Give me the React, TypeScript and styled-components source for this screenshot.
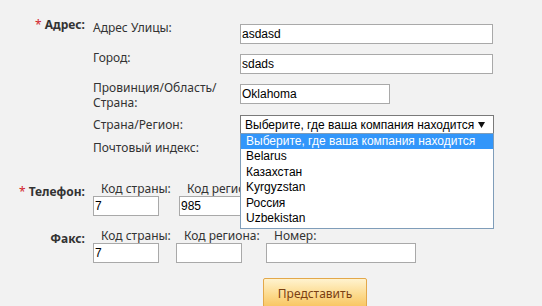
import React from 'react';
import styled, { createGlobalStyle } from 'styled-components';

const GlobalStyle = createGlobalStyle`
  html, body {
    margin: 0;
    padding: 0;
    background: #f2f2f2;
  }
`;

const countries = ['Belarus', 'Казахстан', 'Kyrgyzstan', 'Россия', 'Uzbekistan'];
const placeholder = 'Выберите, где ваша компания находится';

const App: React.FC = () => {
  return (
    <>
      <GlobalStyle />
      <Form onSubmit={(e) => e.preventDefault()}>
        <Group>
          <GroupLabel $pt={-3}>
            <Star>*</Star> Адрес:
          </GroupLabel>
          <div>
            <AddrRow $h={30}>
              <SubLabel>Адрес Улицы:</SubLabel>
              <TextInput $w={253} defaultValue="asdasd" />
            </AddrRow>
            <AddrRow $h={30}>
              <SubLabel>Город:</SubLabel>
              <TextInput $w={253} defaultValue="sdads" />
            </AddrRow>
            <AddrRow $h={31}>
              <SubLabel>
                Провинция/Область/
                <br />
                Страна:
              </SubLabel>
              <TextInput $w={150} defaultValue="Oklahoma" />
            </AddrRow>
            <AddrRow $h={30}>
              <SubLabel $pt={6}>Страна/Регион:</SubLabel>
              <SelectWrap>
                <SelectBox>
                  <span>{placeholder}</span>
                  <svg width="7" height="6" viewBox="0 0 7 6">
                    <path d="M0 0 H7 L3.5 6 Z" fill="#111" />
                  </svg>
                </SelectBox>
                <OptionList>
                  <OptionItem $active>{placeholder}</OptionItem>
                  {countries.map((c) => (
                    <OptionItem key={c}>{c}</OptionItem>
                  ))}
                </OptionList>
              </SelectWrap>
            </AddrRow>
            <AddrRow $h={24}>
              <SubLabel $pt={-1}>Почтовый индекс:</SubLabel>
              <TextInput $w={100} />
            </AddrRow>
          </div>
        </Group>

        <Group $mt={17}>
          <GroupLabel $pt={2}>
            <Star>*</Star> Телефон:
          </GroupLabel>
          <Cells>
            <Cell $w={86}>
              <CellLabel>Код страны:</CellLabel>
              <TextInput $w={66} defaultValue="7" />
            </Cell>
            <Cell $w={93}>
              <CellLabel>Код региона:</CellLabel>
              <TextInput $w={66} defaultValue="985" />
            </Cell>
          </Cells>
        </Group>

        <Group $mt={13}>
          <GroupLabel $pt={2}>Факс:</GroupLabel>
          <Cells>
            <Cell $w={83}>
              <CellLabel>Код страны:</CellLabel>
              <TextInput $w={66} defaultValue="7" />
            </Cell>
            <Cell $w={90}>
              <CellLabel>Код региона:</CellLabel>
              <TextInput $w={66} />
            </Cell>
            <Cell $w={160}>
              <CellLabel>Номер:</CellLabel>
              <TextInput $w={150} />
            </Cell>
          </Cells>
        </Group>

        <Actions>
          <SubmitButton type="submit">Представить</SubmitButton>
        </Actions>
      </Form>
    </>
  );
};

const Form = styled.form`
  padding-top: 20px;
  font-family: "Noto Sans", "Open Sans", sans-serif;
  font-size: 12px;
  color: #333;
`;

const Group = styled.div<{ $mt?: number }>`
  display: grid;
  grid-template-columns: 85px 1fr;
  column-gap: 8px;
  align-items: start;
  margin-top: ${({ $mt }) => $mt ?? 0}px;
`;

const GroupLabel = styled.div<{ $pt?: number }>`
  text-align: right;
  font-weight: bold;
  font-size: 12px;
  line-height: 15px;
  color: #333;
  white-space: nowrap;
  margin-top: ${({ $pt }) => $pt ?? 0}px;
`;

const Star = styled.span`
  color: #d2232a;
  font-weight: normal;
`;

const AddrRow = styled.div<{ $h: number }>`
  display: grid;
  grid-template-columns: 147px 1fr;
  align-items: start;
  height: ${({ $h }) => $h}px;
`;

const SubLabel = styled.div<{ $pt?: number }>`
  line-height: 15px;
  color: #333;
  white-space: nowrap;
  margin-top: ${({ $pt }) => $pt ?? 0}px;
`;

const TextInput = styled.input<{ $w: number }>`
  box-sizing: border-box;
  width: ${({ $w }) => $w}px;
  height: 20px;
  margin: 4px 0 0;
  padding: 0 1px;
  border: 1px solid #a9a9a9;
  background: #fff;
  font-family: "Liberation Sans", Arial, sans-serif;
  font-size: 12px;
  color: #000;
  outline: none;
`;

const SelectWrap = styled.div`
  position: relative;
  margin-top: 4px;
  width: 254px;
`;

const SelectBox = styled.div`
  box-sizing: border-box;
  height: 20px;
  display: flex;
  align-items: center;
  justify-content: space-between;
  padding: 0 8px 0 4px;
  border: 1px solid #7a7a7a;
  background: #fff;
  font-family: "Liberation Sans", Arial, sans-serif;
  font-size: 12px;
  color: #000;
`;

const OptionList = styled.ul`
  position: absolute;
  top: 18px;
  left: 0;
  right: 0;
  margin: 0;
  padding: 0 0 2px;
  list-style: none;
  box-sizing: border-box;
  border: 1px solid #7f9db9;
  background: #fff;
  z-index: 10;
`;

const OptionItem = styled.li<{ $active?: boolean }>`
  height: 15.4px;
  line-height: 15px;
  padding: 0 5px;
  font-family: "Liberation Sans", Arial, sans-serif;
  font-size: 12px;
  white-space: nowrap;
  background: ${({ $active }) => ($active ? '#3296fa' : '#fff')};
  color: ${({ $active }) => ($active ? '#fff' : '#000')};
`;

const Cells = styled.div`
  display: flex;
`;

const Cell = styled.div<{ $w: number }>`
  width: ${({ $w }) => $w}px;
  flex: none;
  display: flex;
  flex-direction: column;
  align-items: flex-start;
`;

const CellLabel = styled.div`
  padding-left: 8px;
  line-height: 14px;
  height: 10px;
  white-space: nowrap;
  color: #333;
`;

const Actions = styled.div`
  margin-top: 15px;
  padding-left: 263px;
`;

const SubmitButton = styled.button`
  box-sizing: border-box;
  width: 104px;
  height: 32px;
  padding-bottom: 2px;
  border: 1px solid #e3a84a;
  border-radius: 2px;
  background: linear-gradient(to bottom, #fff3cf 0%, #fcd98a 55%, #f8c15a 100%);
  color: #7b4012;
  font-family: "Noto Sans", "Open Sans", sans-serif;
  font-size: 12px;
  cursor: pointer;
`;

export default App;
